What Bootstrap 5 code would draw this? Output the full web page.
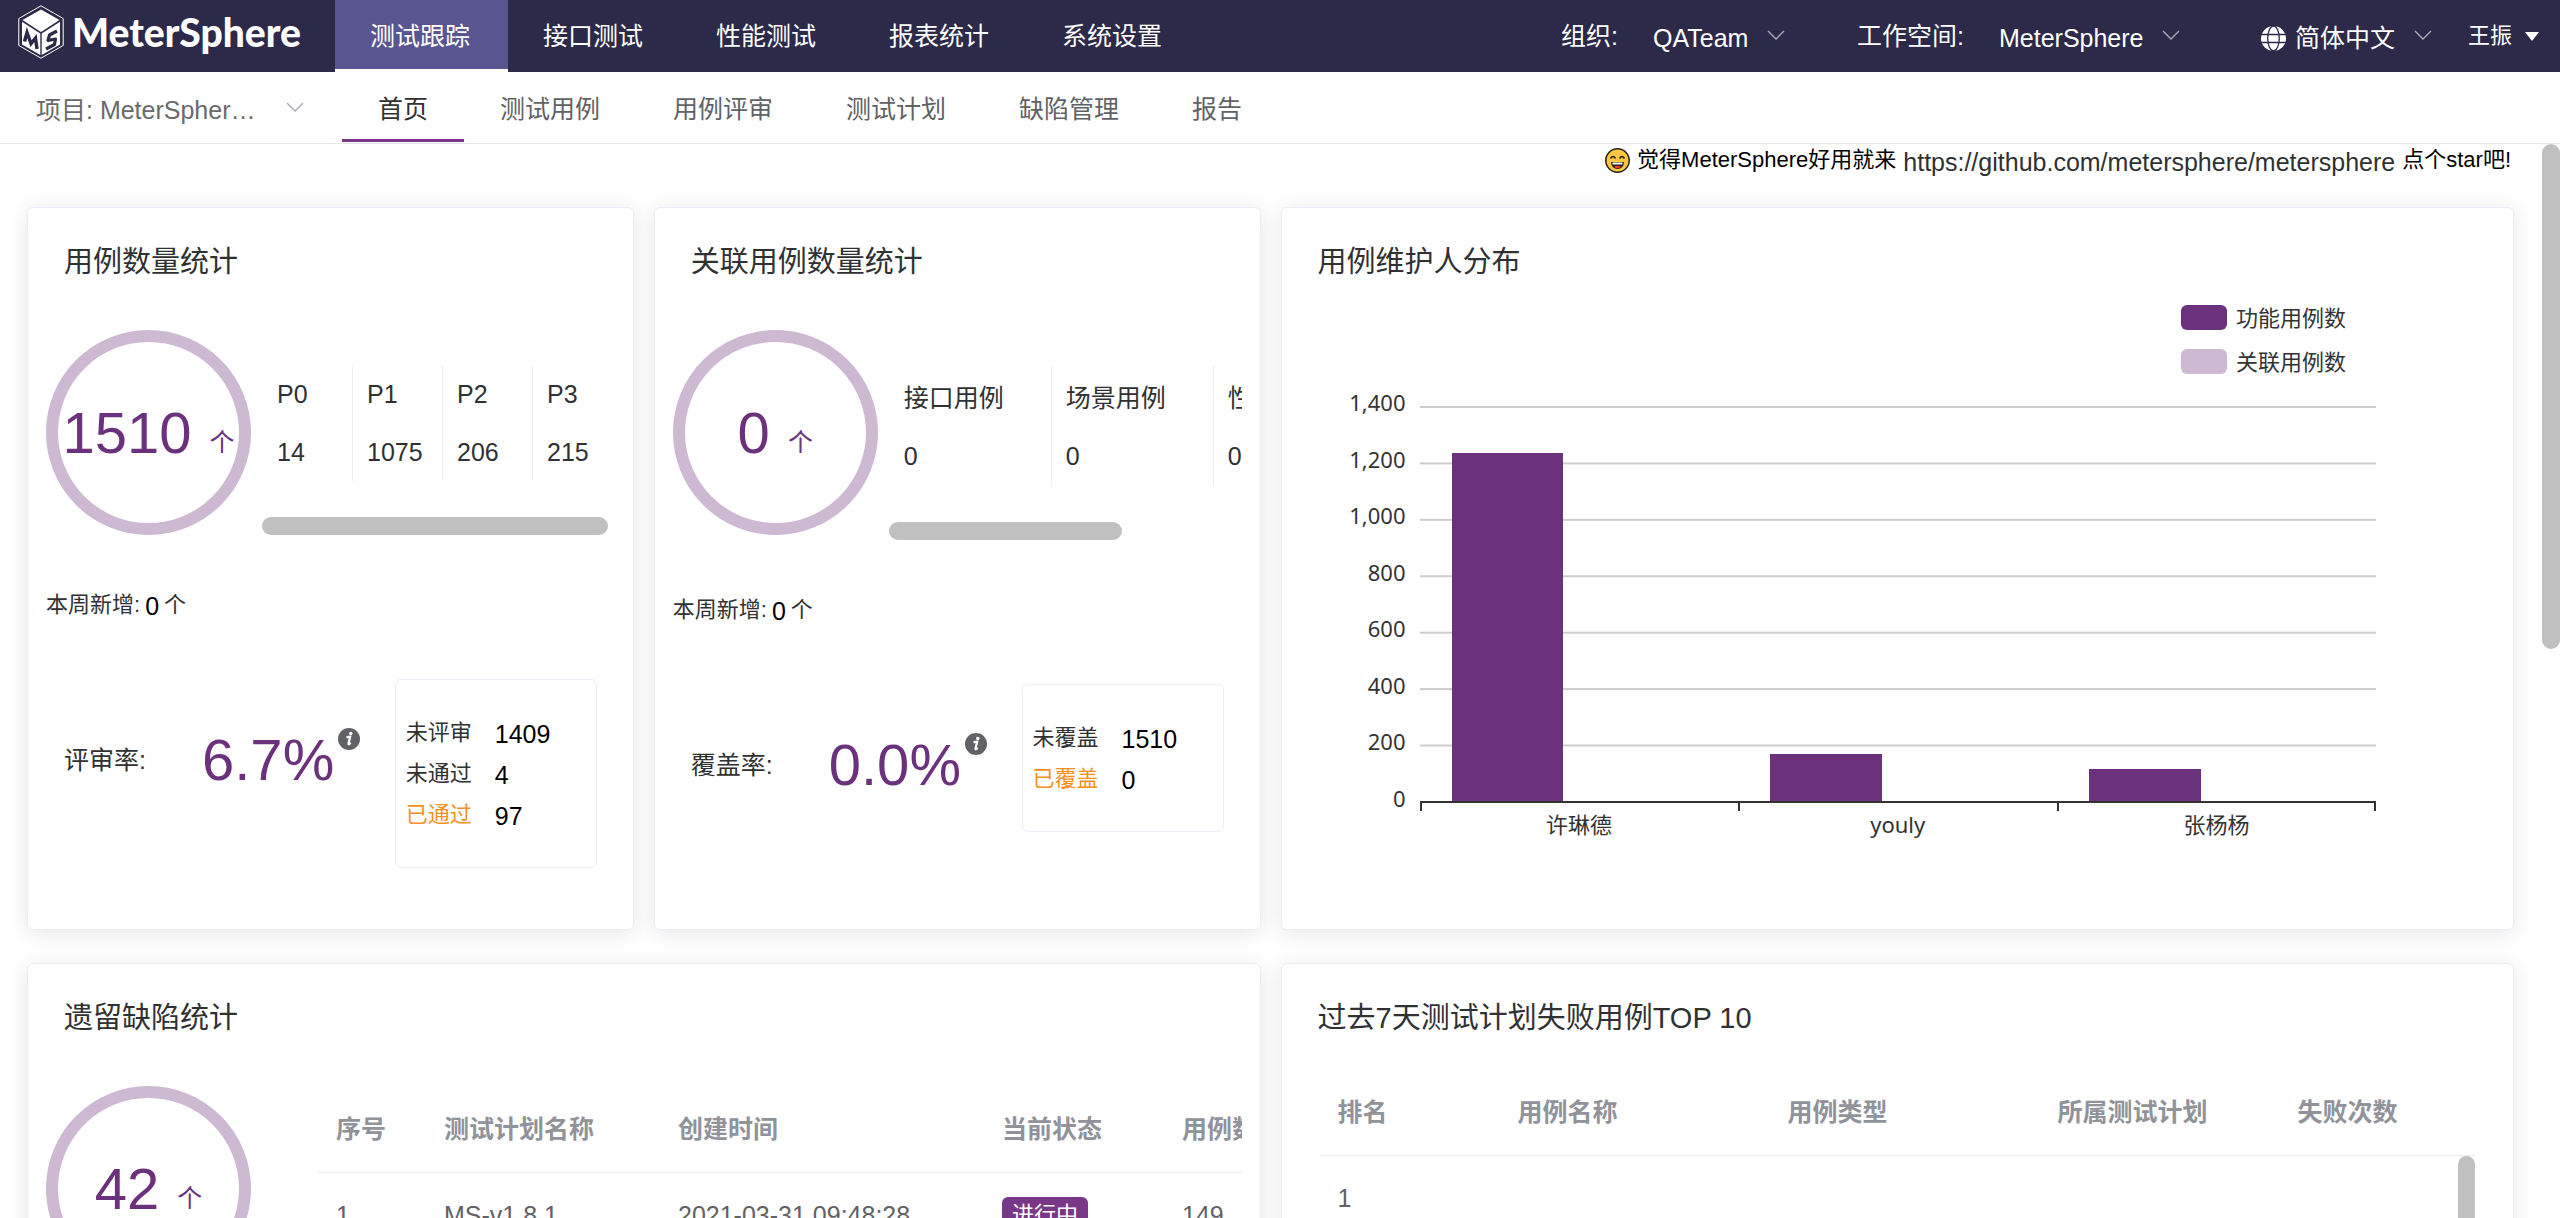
<!DOCTYPE html>
<html lang="zh-CN">
<head>
<meta charset="utf-8">
<meta name="viewport" content="width=device-width, initial-scale=1">
<title>MeterSphere</title>
<link href="https://cdn.jsdelivr.net/npm/bootstrap@5.3.0/dist/css/bootstrap.min.css" rel="stylesheet">
<style>
:root{--ms-dark:#2c2a48;--ms-tab:#595591;--ms-purple:#6b317c;--ms-light:#cdb9d2;--ms-line:#ebeef5;--ms-text:#303133;--ms-grey:#c0c0c0}
body{font-family:"Liberation Sans","Noto Sans CJK SC",sans-serif;font-size:25px;line-height:36px;color:var(--ms-text);background:#fff}
a{text-decoration:none;color:inherit}
.fs-s{font-size:22px}
.topbar{height:72px;background:var(--ms-dark);color:#fff}
.brand-area{width:335px;padding-left:18px;gap:8px}
.brand-name{font-family:Lato,"Open Sans",sans-serif;font-weight:900;font-size:39px;line-height:44px}
.topmenu a{display:block;height:69px;padding:18px 36px 0 35px;min-width:173px;white-space:nowrap}
.topmenu .active{background:var(--ms-tab)}
.topmenu li:first-child{background:#fff}
.plain-select{appearance:none;border:0;border-radius:0;color:inherit;font:inherit;line-height:36px;padding:4px 36px 0 0;height:40px;outline:0;
 background:transparent url("data:image/svg+xml,%3Csvg xmlns='http://www.w3.org/2000/svg' viewBox='0 0 18 10'%3E%3Cpath d='M1 1l8 8 8-8' fill='none' stroke='%23a8abb5' stroke-width='1.4'/%3E%3C/svg%3E") no-repeat right 14px/18px 10px;background-position:right 14px}
.plain-select option{color:#303133}
.user-btn{background:none;border:0;color:#fff;padding:0 21px 0 0;margin-left:36px;gap:13px}
.user-btn i{border:7px solid transparent;border-top:9px solid #fff;border-bottom:0}
.subbar{height:72px;border-bottom:1px solid #e3e5e9}
.project-box{width:342px;padding-left:36px}
.project-box .plain-select{width:268px;color:#6a6a6c}
.submenu a{display:block;height:70px;padding:19px 36px 0;min-width:173px;color:#606266;white-space:nowrap}
.submenu .active{color:#303133;border-bottom:3px solid #783887;min-width:0}
.page-area{height:calc(100vh - 144px);overflow:hidden}
.rail{width:18px;flex:none}
.rail span{display:block;height:505px;border-radius:9px;background:var(--ms-grey)}
.notice{height:63px;padding-right:3px;color:#000}
.notice>div{height:32px;gap:7px}
.notice a{padding-top:3px;color:#303133}
.board{padding:0 28px 0 27px}
.board .row{--bs-gutter-x:20px;margin-bottom:33px}
.panel{height:723px;border:1px solid var(--ms-line);border-radius:6px;box-shadow:0 3px 20px rgba(0,0,0,.1);padding:0 18px;background:#fff;overflow:hidden}
.panel h2{font-size:29px;line-height:36px;font-weight:400;margin:36px 18px 50px;color:var(--ms-text)}
.ring{width:205px;height:205px;border:12px solid var(--ms-light);border-radius:50%;color:var(--ms-purple);flex:none;display:flex;align-items:center;justify-content:center;gap:18px}
.big-num{font-size:58px;line-height:64px;color:var(--ms-purple)}
.ring small{font-size:25px;line-height:36px;padding-top:18px}
.strip{padding-top:36px;margin-left:11px;overflow:hidden;flex:1;min-width:0}
.strip-cols>div{flex:none;width:90px;padding:10px 0 11px 14px;border-left:1px solid var(--ms-line)}
.strip-cols>div:first-child{border-left-color:transparent}
.strip-cols.wide>div{width:162px;padding-top:14px;padding-bottom:12px}
.strip-cols p{margin:0;height:36px}
.strip-cols p+p{margin-top:22px}
.hbar{height:18px;border-radius:9px;background:var(--ms-grey);margin-top:36px}
.weekly{margin:52px 0 56px;height:36px;gap:5px}
.weekly b,.tally b{font-weight:400;font-size:25px;color:#000;padding-top:2px}
.rate{height:162px;padding-left:18px}
.rate-label{width:138px}
.info{width:22px;height:22px;margin-left:4px}
.tally{width:202px;border:1px solid var(--ms-line);border-radius:6px;padding:32px 0 32px 10px;margin-right:18px}
.tally div{height:41px;display:flex;align-items:center}
.tally span{width:89px}
.warn{color:#f7901e}
.legend-box{margin-right:149px;gap:8px}
.legend-box div{height:36px;gap:9px;display:flex;align-items:center}
.legend-box i{width:46px;height:25px;border-radius:6px;background:var(--ms-purple)}
.legend-box div+div i{background:var(--ms-light)}
.chart{font-family:"Noto Sans","Noto Sans CJK SC",sans-serif;font-size:22px;line-height:30px;color:#333}
.axis-y{width:106px;margin:-19px 14px -11px 0;height:426px;text-align:right}
.plot{flex:1;margin-right:119px}
.plot-area{height:397px;border-bottom:2px solid #333;background:linear-gradient(#ccc 2px,transparent 2px) 0 0/100% calc(100% / 7)}
.plot-area>div,.plot-x>div{flex:1}
.plot-area>div{display:flex;align-items:flex-end;padding-left:32px}
.plot-area span{width:39%;background:var(--ms-purple)}
.plot-x>div{text-align:center;padding-top:6px;background:linear-gradient(#333,#333) 0 0/2px 8px no-repeat}
.plot-x>div:last-child{background:linear-gradient(#333,#333) 0 0/2px 8px no-repeat,linear-gradient(#333,#333) 100% 0/2px 8px no-repeat}
.data{width:100%;table-layout:fixed;white-space:nowrap;color:#606266;margin:0}
.data th{font-weight:700;color:#909399;padding:0 18px 25px;border-bottom:1px solid var(--ms-line)}
.data td{padding:24px 18px;line-height:36px}
.state{display:inline-block;background:#783887;color:#fff;font-size:22px;line-height:36px;height:36px;padding:0 10px;border-radius:6px;vertical-align:top}
.plan-list{margin-left:67px;padding-top:25px;overflow:hidden;flex:1;min-width:0}
.plan-list .data{width:1120px}
.rank{margin:58px 20px 0;position:relative}
.vthumb{position:absolute;right:0;top:62px;width:17px;height:160px;border-radius:9px;background:var(--ms-grey)}
</style>
<script src="https://cdn.jsdelivr.net/npm/bootstrap@5.3.0/dist/js/bootstrap.bundle.min.js"></script>
</head>
<body class="overflow-hidden">
<header class="topbar d-flex">
  <a href="#" class="brand-area d-flex align-items-center flex-shrink-0 pb-2">
    <svg width="46" height="54" viewBox="0 0 46 54" aria-hidden="true">
      <path d="M23 .8L45.200 13.500V40.500L23 53.200.8 40.500V13.500z" fill="none" stroke="#fff" stroke-width="1"/>
      <path d="M23 4.500L41.500 15 23 27 4.500 15z" fill="#fff"/>
      <path d="M4 16.800L22.300 28.600V50L4 39.600z" fill="#fff"/>
      <path d="M42 16.800L23.700 28.600V50L42 39.600z" fill="#fff"/>
      <path d="M6.500 36.500L9 27.500 13 38.500 17.500 33 19 44" fill="none" stroke="#2c2a48" stroke-width="3.400"/>
      <path d="M39 26L31.500 30 30 35.500 37.500 34 36.500 39.500 28 44" fill="none" stroke="#2c2a48" stroke-width="3.200" stroke-linejoin="round"/>
    </svg>
    <span class="brand-name">MeterSphere</span>
  </a>
  <ul class="topmenu nav flex-nowrap">
    <li><a class="active" href="#">测试跟踪</a></li>
    <li><a href="#">接口测试</a></li>
    <li><a href="#">性能测试</a></li>
    <li><a href="#">报表统计</a></li>
    <li><a href="#">系统设置</a></li>
  </ul>
  <div class="d-flex align-items-center ms-auto text-nowrap">
    <label for="org" style="margin-right:35px">组织:</label>
    <select id="org" class="plain-select"><option>QATeam</option></select>
    <label for="ws" style="margin:0 35px 0 72px">工作空间:</label>
    <select id="ws" class="plain-select"><option>MeterSphere</option></select>
    <svg width="25" height="25" viewBox="0 0 25 25" style="margin:4px 9px 0 81px" aria-hidden="true">
      <circle cx="12.500" cy="12.500" r="12.500" fill="#fff"/>
      <g fill="none" stroke="#2c2a48" stroke-width="1.300"><ellipse cx="12.500" cy="12.500" rx="5.800" ry="12.500"/><path d="M0 8.500h25M0 16.500h25"/></g>
    </svg>
    <select aria-label="语言" class="plain-select"><option>简体中文</option></select>
    <button type="button" class="user-btn fs-s d-flex align-items-center">王振<i></i></button>
  </div>
</header>
<nav class="subbar d-flex">
  <div class="project-box d-flex align-items-center">
    <select aria-label="项目" class="plain-select"><option>项目: MeterSpher…</option></select>
  </div>
  <ul class="submenu nav flex-nowrap">
    <li><a class="active" href="#">首页</a></li>
    <li><a href="#">测试用例</a></li>
    <li><a href="#">用例评审</a></li>
    <li><a href="#">测试计划</a></li>
    <li><a href="#">缺陷管理</a></li>
    <li><a href="#">报告</a></li>
  </ul>
</nav>
<div class="page-area d-flex">
<main class="board flex-grow-1">
  <div class="notice fs-s">
    <div class="d-flex justify-content-end align-items-center">
      <svg width="25" height="25" viewBox="0 0 25 25" aria-hidden="true">
        <circle cx="12.500" cy="12.500" r="11.700" fill="#ffc83d" stroke="#1f1f1f" stroke-width="1.500"/>
        <path d="M5.500 10.500q2.500-4 5 0M14.500 10.500q2.500-4 5 0" fill="none" stroke="#1f1f1f" stroke-width="1.500"/>
        <path d="M6 14h13q-.500 7-6.500 7T6 14z" fill="#1f1f1f"/><path d="M7.500 14.500h10v2h-10z" fill="#fff"/><path d="M9 19q3.500-2.500 7 0-3.500 2.500-7 0z" fill="#f03a17"/>
      </svg>
      <span>觉得MeterSphere好用就来</span>
      <a href="#" style="font-size:25px">https://github.com/metersphere/metersphere</a>
      <span>点个star吧!</span>
    </div>
  </div>
  <div class="row">
    <div class="col-3">
      <section class="panel">
        <h2>用例数量统计</h2>
        <div class="d-flex align-items-start">
          <div class="ring"><span class="big-num">1510</span><small>个</small></div>
          <div class="strip">
            <div class="strip-cols d-flex">
              <div><p>P0</p><p>14</p></div><div><p>P1</p><p>1075</p></div><div><p>P2</p><p>206</p></div><div><p>P3</p><p>215</p></div>
            </div>
            <div class="hbar" style="width:98%"></div>
          </div>
        </div>
        <div class="weekly fs-s d-flex align-items-center"><span>本周新增:</span><b>0</b><span>个</span></div>
        <div class="d-flex align-items-start">
          <div class="rate d-flex align-items-center">
            <span class="rate-label">评审率:</span>
            <span class="d-flex"><span class="big-num">6.7%</span>
              <svg class="info" viewBox="0 0 22 22" aria-hidden="true"><circle cx="11" cy="11" r="11" fill="#606266"/><circle cx="12.800" cy="5.500" r="1.700" fill="#fff"/><path d="M8.500 9.500q2.500-1 3.700-1L10.500 15.500q-.300 1.500 2.300-.500" fill="none" stroke="#fff" stroke-width="2.200"/></svg>
            </span>
          </div>
          <div class="tally fs-s ms-auto">
            <div><span>未评审</span><b>1409</b></div><div><span>未通过</span><b>4</b></div><div><span class="warn">已通过</span><b>97</b></div>
          </div>
        </div>
      </section>
    </div>
    <div class="col-3">
      <section class="panel">
        <h2>关联用例数量统计</h2>
        <div class="d-flex align-items-start">
          <div class="ring"><span class="big-num">0</span><small>个</small></div>
          <div class="strip">
            <div class="strip-cols wide d-flex">
              <div><p>接口用例</p><p>0</p></div><div><p>场景用例</p><p>0</p></div><div><p>性能用例</p><p>0</p></div>
            </div>
            <div class="hbar" style="width:66%"></div>
          </div>
        </div>
        <div class="weekly fs-s d-flex align-items-center"><span>本周新增:</span><b>0</b><span>个</span></div>
        <div class="d-flex align-items-start">
          <div class="rate d-flex align-items-center">
            <span class="rate-label">覆盖率:</span>
            <span class="d-flex"><span class="big-num">0.0%</span>
              <svg class="info" viewBox="0 0 22 22" aria-hidden="true"><circle cx="11" cy="11" r="11" fill="#606266"/><circle cx="12.800" cy="5.500" r="1.700" fill="#fff"/><path d="M8.500 9.500q2.500-1 3.700-1L10.500 15.500q-.300 1.500 2.300-.500" fill="none" stroke="#fff" stroke-width="2.200"/></svg>
            </span>
          </div>
          <div class="tally fs-s ms-auto">
            <div><span>未覆盖</span><b>1510</b></div><div><span class="warn">已覆盖</span><b>0</b></div>
          </div>
        </div>
      </section>
    </div>
    <div class="col-6">
      <section class="panel">
        <h2 class="mb-0">用例维护人分布</h2>
        <div class="chart">
          <div class="d-flex justify-content-end" style="padding:19px 0 27px">
            <div class="legend-box d-flex flex-column"><div><i></i>功能用例数</div><div><i></i>关联用例数</div></div>
          </div>
          <div class="d-flex">
            <div class="axis-y d-flex flex-column justify-content-between">
              <span>1,400</span><span>1,200</span><span>1,000</span><span>800</span><span>600</span><span>400</span><span>200</span><span>0</span>
            </div>
            <div class="plot">
              <div class="plot-area d-flex">
                <div><span style="height:88%"></span></div><div><span style="height:12%"></span></div><div><span style="height:8%"></span></div>
              </div>
              <div class="plot-x d-flex"><div>许琳德</div><div>youly</div><div>张杨杨</div></div>
            </div>
          </div>
        </div>
      </section>
    </div>
  </div>
  <div class="row">
    <div class="col-6">
      <section class="panel">
        <h2>遗留缺陷统计</h2>
        <div class="d-flex align-items-start">
          <div class="ring"><span class="big-num">42</span><small>个</small></div>
          <div class="plan-list">
            <table class="data">
              <colgroup><col style="width:108px"><col style="width:234px"><col style="width:324px"><col style="width:180px"><col></colgroup>
              <thead><tr><th>序号</th><th>测试计划名称</th><th>创建时间</th><th>当前状态</th><th>用例数</th></tr></thead>
              <tbody><tr><td>1</td><td>MS-v1.8.1</td><td>2021-03-31 09:48:28</td><td><span class="state">进行中</span></td><td>149</td></tr></tbody>
            </table>
          </div>
        </div>
      </section>
    </div>
    <div class="col-6">
      <section class="panel">
        <h2 class="mb-0">过去7天测试计划失败用例TOP 10</h2>
        <div class="rank">
          <table class="data">
            <colgroup><col style="width:180px"><col style="width:270px"><col style="width:270px"><col style="width:240px"><col></colgroup>
            <thead><tr><th>排名</th><th>用例名称</th><th>用例类型</th><th>所属测试计划</th><th>失败次数</th></tr></thead>
            <tbody><tr><td>1</td><td></td><td></td><td></td><td></td></tr></tbody>
          </table>
          <div class="vthumb"></div>
        </div>
      </section>
    </div>
  </div>
</main>
<div class="rail"><span></span></div>
</div>
</body>
</html>
